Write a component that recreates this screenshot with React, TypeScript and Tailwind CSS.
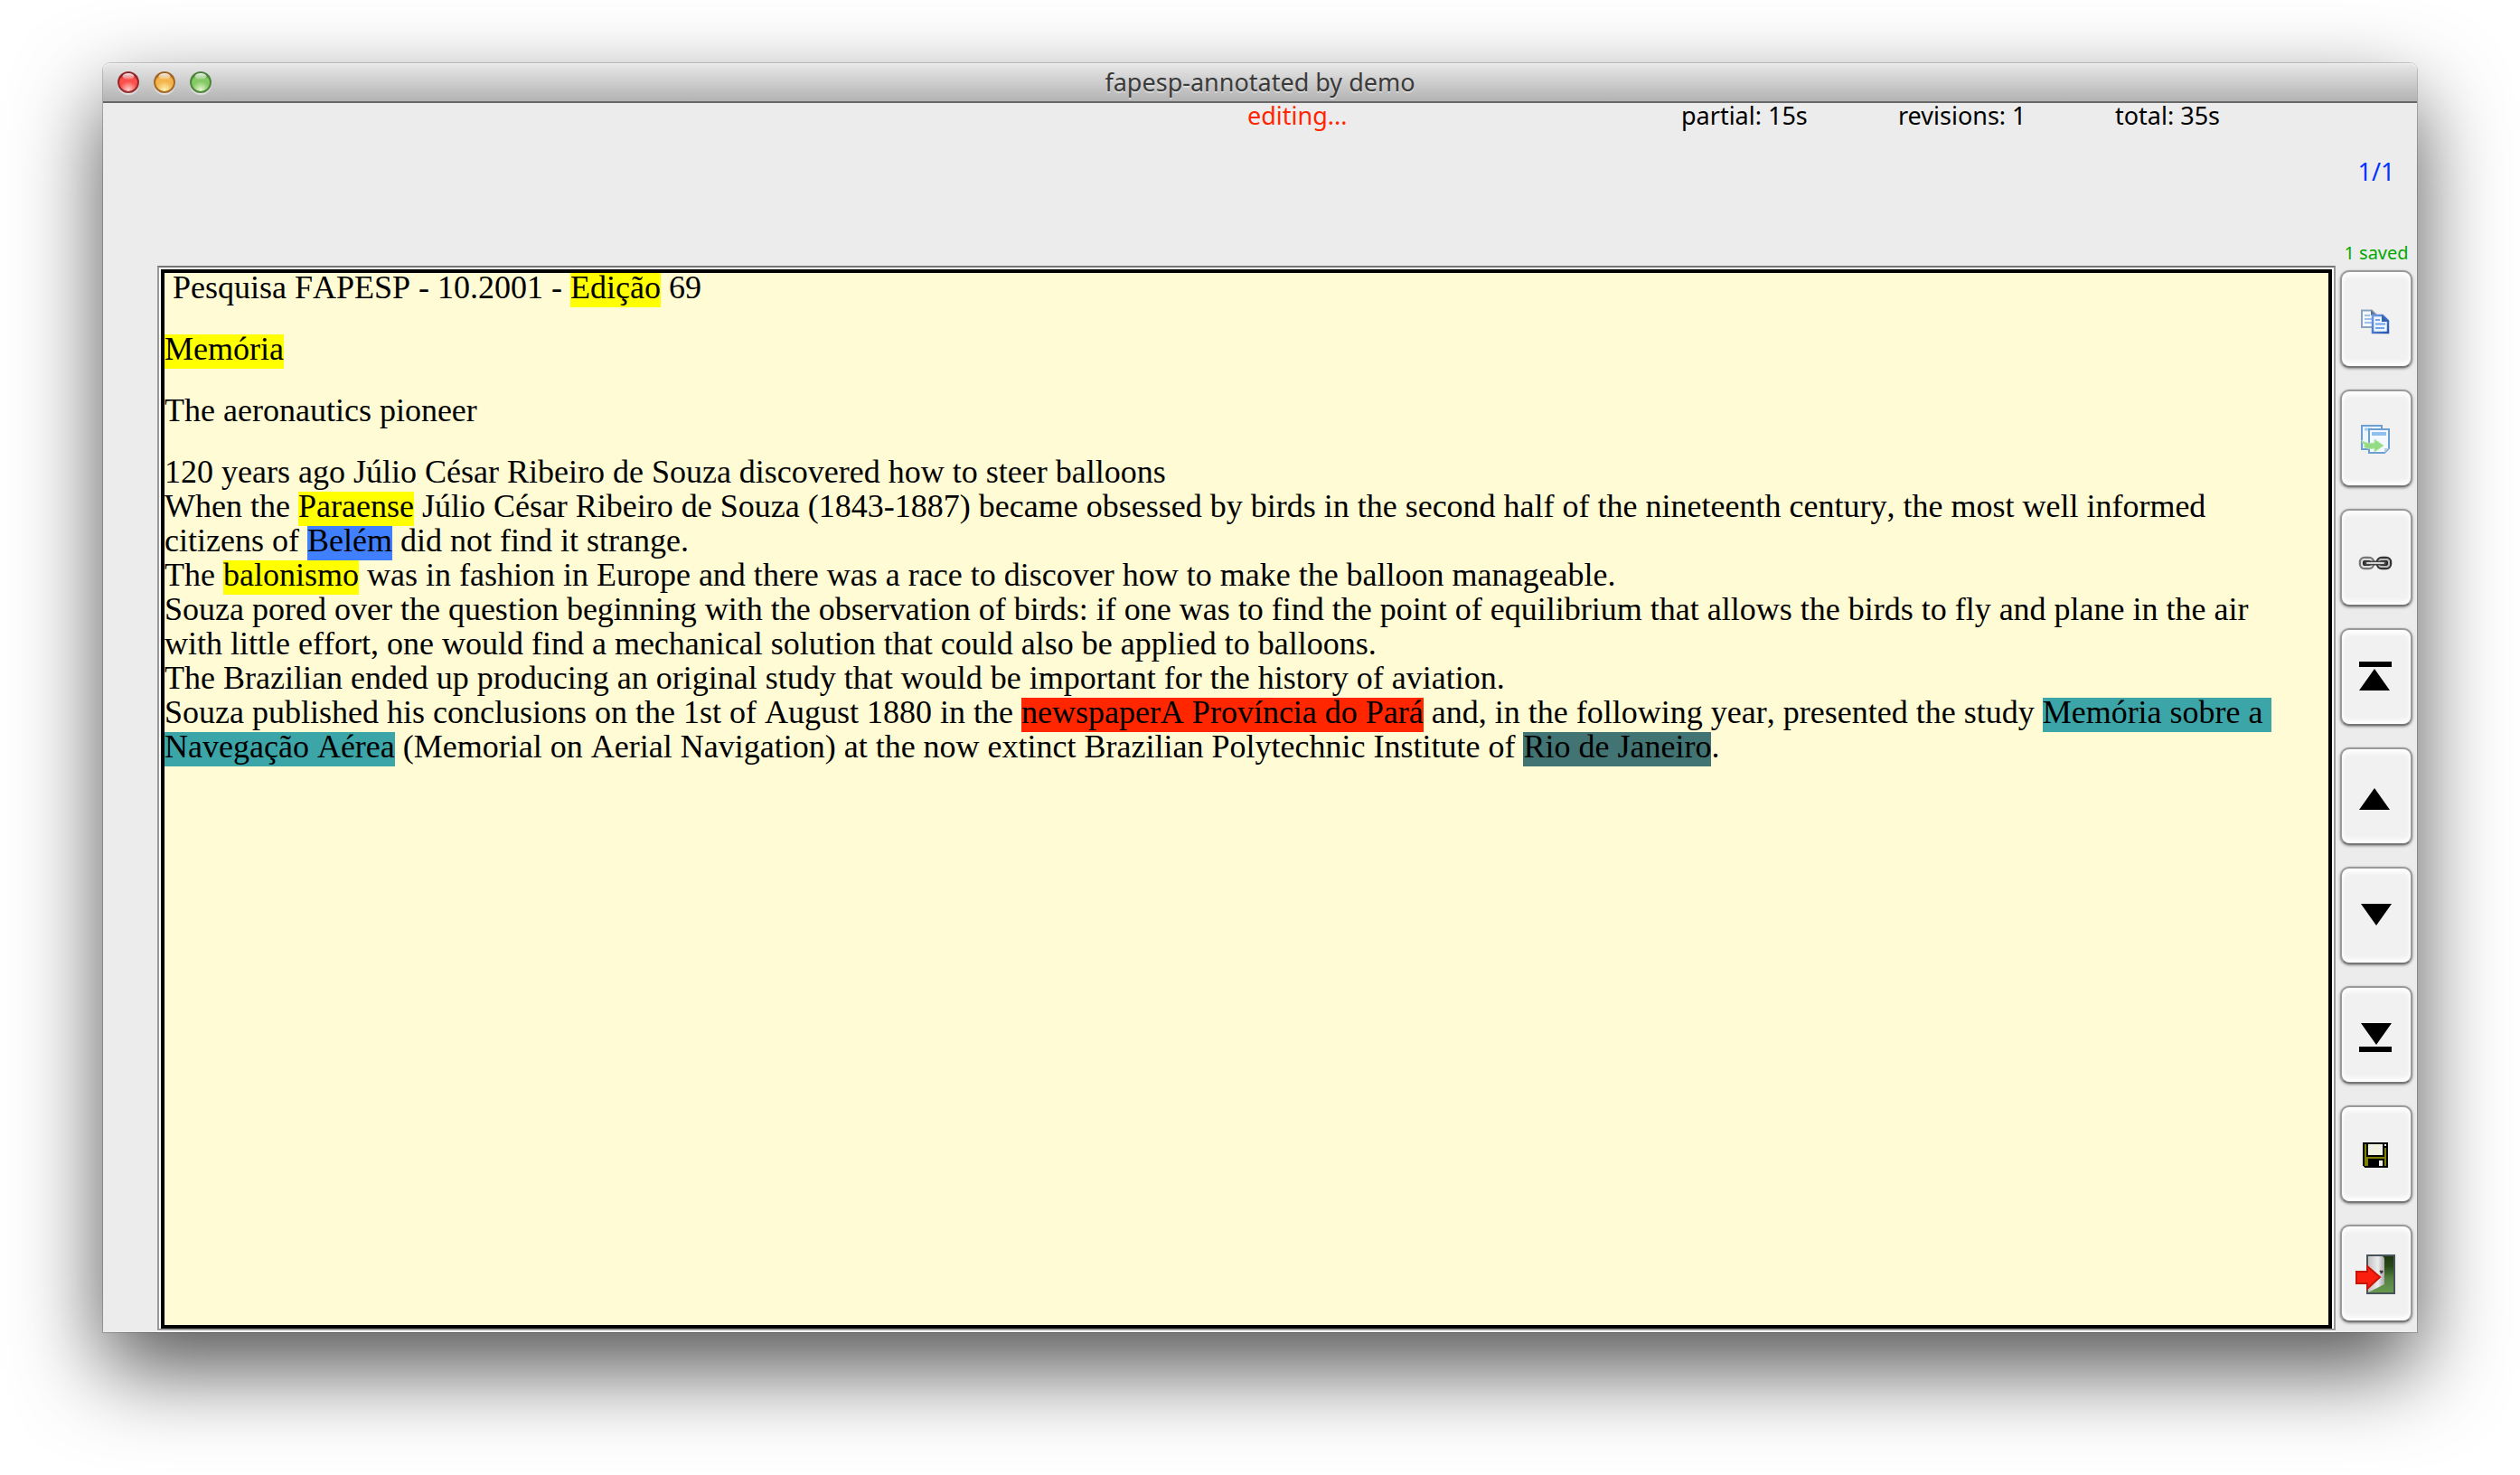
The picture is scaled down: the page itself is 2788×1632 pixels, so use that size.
import type { ReactNode } from "react";

function Mark({ className, children }: { className: string; children: ReactNode }) {
  return (
    <mark className={`inline-block whitespace-pre pb-[6px] -mb-[6px] leading-8 text-black ${className}`}>
      {children}
    </mark>
  );
}

function TrafficLight({
  id,
  label,
  rim,
  mid,
  glow,
}: {
  id: string;
  label: string;
  rim: string;
  mid: string;
  glow: string;
}) {
  return (
    <button type="button" aria-label={label} className="block size-6 rounded-full shadow-[0_2px_1px_rgba(255,255,255,0.55)]">
      <svg viewBox="0 0 24 24" className="block size-6">
        <defs>
          <radialGradient id={`${id}-body`} cx="50%" cy="88%" r="85%">
            <stop offset="0" stopColor={glow} />
            <stop offset="0.5" stopColor={mid} />
            <stop offset="0.75" stopColor={mid} />
            <stop offset="1" stopColor={rim} />
          </radialGradient>
          <linearGradient id={`${id}-shine`} x1="0" y1="0" x2="0" y2="1">
            <stop offset="0" stopColor="#fff" stopOpacity="0.95" />
            <stop offset="1" stopColor="#fff" stopOpacity="0.1" />
          </linearGradient>
        </defs>
        <circle cx="12" cy="12" r="11" fill={`url(#${id}-body)`} stroke={rim} strokeWidth="2" strokeOpacity="0.85" />
        <ellipse cx="12" cy="5.5" rx="6.5" ry="3.5" fill={`url(#${id}-shine)`} />
      </svg>
    </button>
  );
}

function ToolButton({ label, children }: { label: string; children: ReactNode }) {
  return (
    <button
      type="button"
      aria-label={label}
      className="flex h-[108px] w-full shrink-0 items-center justify-center rounded-[10px] border-2 border-[#9a9a9a] border-b-[#777777] bg-[#f1f1f1] shadow-[0_1px_3px_rgba(0,0,0,0.45),inset_0_4px_5px_#ffffff,inset_0_-4px_5px_#ffffff]"
    >
      <svg viewBox="0 0 48 48" className="size-12">
        {children}
      </svg>
    </button>
  );
}

function CopyIcon() {
  return (
    <>
      <defs>
        <linearGradient id="copy-front" x1="0" y1="0" x2="1" y2="1">
          <stop offset="0" stopColor="#6f9be0" />
          <stop offset="1" stopColor="#2657b0" />
        </linearGradient>
      </defs>
      <path d="M8 14.500h11l5 5V33H8z" fill="#f4f8fd" stroke="#8ba3bd" strokeWidth="2" />
      <path d="M18 14v6h6z" fill="#5d7288" />
      <path d="M11 20h6M11 24h8M11 28h8" stroke="#9cc2ea" strokeWidth="2" />
      <path d="M20 20h11l6 6v13H20z" fill="#eef5ff" stroke="url(#copy-front)" strokeWidth="2.500" />
      <path d="M30 19v8h8z" fill="#3465b8" />
      <path d="M23 25h5M23 29.500h11M23 34h10" stroke="#6ea2ea" strokeWidth="2" />
    </>
  );
}

function TransferIcon() {
  return (
    <>
      <path d="M8 10h22v26H8z" fill="#eef6fd" stroke="#6d9fd0" strokeWidth="2" />
      <path d="M11 14h8" stroke="#a5cdf0" strokeWidth="3" />
      <path d="M16 14h22v21l-5 5H16z" fill="#f3f9fe" stroke="#6d9fd0" strokeWidth="2" />
      <path d="M19 19h16" stroke="#8fc0ee" strokeWidth="4" />
      <path d="M33 40v-5h5z" fill="#b9cfe4" />
      <path d="M8 26c3 3 7 4 14 3v-4l10 7-10 7v-4c-6 1-10 0-12-2l2-2c-2 0-4-2-4-5z" fill="#94dc84" stroke="#b6e6a8" strokeWidth="1" />
    </>
  );
}

function ChainIcon() {
  return (
    <g fill="none">
      <rect x="6" y="24" width="15" height="12" rx="5" stroke="#777777" strokeWidth="2.500" />
      <rect x="8" y="26" width="11" height="8" rx="3" fill="#222222" stroke="#dddddd" strokeWidth="2" />
      <rect x="25" y="24" width="15" height="12" rx="5" stroke="#333333" strokeWidth="2.500" />
      <rect x="27" y="26" width="11" height="8" rx="3" fill="#222222" stroke="#bbbbbb" strokeWidth="2" />
      <path d="M13 30h20" stroke="#444444" strokeWidth="5" strokeLinecap="round" />
      <path d="M14 30h18" stroke="#d6d6d6" strokeWidth="2" strokeLinecap="round" />
    </g>
  );
}

function SaveIcon() {
  return (
    <g shapeRendering="crispEdges">
      <path d="M9 11h28v28H11l-2-2z" fill="#000000" />
      <path d="M11 13h24v24H11z" fill="#808000" />
      <path d="M13 11h20v16H13z" fill="#000000" />
      <path d="M15 13h16v12H15z" fill="#f1f1e4" />
      <path d="M33 13h2v4h-2z" fill="#000000" />
      <path d="M33 13h2v2h-2z" fill="#f1f1e4" />
      <path d="M15 29h18v8H15z" fill="#000000" />
      <path d="M27 31h4v6h-4z" fill="#f1f1e4" />
    </g>
  );
}

function ExitIcon() {
  return (
    <>
      <defs>
        <linearGradient id="exit-outside" x1="0" y1="0" x2="0" y2="1">
          <stop offset="0" stopColor="#1c3310" />
          <stop offset="0.300" stopColor="#2a4a1a" />
          <stop offset="0.600" stopColor="#538040" />
          <stop offset="1" stopColor="#6a9a50" />
        </linearGradient>
        <linearGradient id="exit-door" x1="0" y1="0" x2="1" y2="0">
          <stop offset="0" stopColor="#c2c2c2" />
          <stop offset="0.600" stopColor="#ececec" />
          <stop offset="1" stopColor="#a8a8a8" />
        </linearGradient>
      </defs>
      <rect x="14" y="4" width="30" height="42" fill="url(#exit-outside)" stroke="#47545a" strokeWidth="2" />
      <path d="M15 5h15q3 0 3 4v27L15 45z" fill="url(#exit-door)" />
      <path d="M28 21l3 2M29 24l2-3" stroke="#333333" strokeWidth="2" />
      <path d="M2 22h12v-6l14 12-14 13v-6H2z" fill="#fa1e0e" stroke="#c81408" strokeWidth="2" />
    </>
  );
}

const tools: { label: string; icon: ReactNode }[] = [
  { label: "Copy", icon: <CopyIcon /> },
  { label: "Transfer", icon: <TransferIcon /> },
  { label: "Link", icon: <ChainIcon /> },
  { label: "First", icon: <path d="M5 7h36v6H5zM22 15l17 24H5z" /> },
  { label: "Previous", icon: <path d="M22 15l17 24H5z" /> },
  { label: "Next", icon: <path d="M7 11h34L24 35z" /> },
  { label: "Last", icon: <path d="M7 11h34L24 35zM5 37h36v6H5z" /> },
  { label: "Save", icon: <SaveIcon /> },
  { label: "Exit", icon: <ExitIcon /> },
];

function Document() {
  return (
    <article className="-mt-[3px] flex flex-col gap-[30px] pr-6 font-['Liberation_Serif',serif] text-[36px] leading-[38px] text-black [font-kerning:none]">
      <p>
        &nbsp;Pesquisa FAPESP - 10.2001 - <Mark className="bg-[#ffff00]">Edição</Mark> 69
      </p>
      <p>
        <Mark className="bg-[#ffff00]">Memória</Mark>
      </p>
      <p>The aeronautics pioneer</p>
      <div>
        <p>120 years ago Júlio César Ribeiro de Souza discovered how to steer balloons</p>
        <p>
          When the <Mark className="bg-[#ffff00]">Paraense</Mark> Júlio César Ribeiro de Souza (1843-1887) became
          obsessed by birds in the second half of the nineteenth century, the most well informed citizens of{" "}
          <Mark className="bg-[#4080ff]">Belém</Mark> did not find it strange.
        </p>
        <p>
          The <Mark className="bg-[#ffff00]">balonismo</Mark> was in fashion in Europe and there was a race to discover
          how to make the balloon manageable.
        </p>
        <p>
          Souza pored over the question beginning with the observation of birds: if one was to find the point of
          equilibrium that allows the birds to fly and plane in the air with little effort, one would find a mechanical
          solution that could also be applied to balloons.
        </p>
        <p>
          The Brazilian ended up producing an original study that would be important for the history of aviation.
        </p>
        <p>
          Souza published his conclusions on the 1st of August 1880 in the{" "}
          <Mark className="bg-[#ff2600]">newspaperA Província do Pará</Mark> and, in the following year, presented the
          study <Mark className="bg-[#3ca5a8]">{"Memória sobre a "}</Mark>
          <Mark className="bg-[#3ca5a8]">Navegação Aérea</Mark> (Memorial on Aerial Navigation) at the now extinct
          Brazilian Polytechnic Institute of <Mark className="bg-[#427474]">Rio de Janeiro</Mark>.
        </p>
      </div>
    </article>
  );
}

export default function App() {
  return (
    <div className="flex min-h-screen flex-col bg-white px-[114px] pt-[70px] pb-[158px] font-['Noto_Sans',sans-serif] text-[27px]">
      <div className="flex flex-1 flex-col rounded-t-[8px] bg-[#ececec] shadow-[0_0_0_1px_rgba(0,0,0,0.2),0_40px_96px_rgba(0,0,0,0.68)]">
        <header className="flex h-11 items-center rounded-t-[8px] border-b-2 border-[#686868] bg-linear-to-b from-[#e8e8e8] to-[#b3b3b3] px-4 leading-[42px] shadow-[inset_0_1px_0_#f6f6f6]">
          <div className="flex flex-1 gap-4">
            <TrafficLight id="close" label="Close" rim="#8a1a1c" mid="#f9504c" glow="#ffd0cc" />
            <TrafficLight id="minimize" label="Minimize" rim="#9a5a14" mid="#f4b44c" glow="#fff3b0" />
            <TrafficLight id="zoom" label="Zoom" rim="#3f7a2c" mid="#85c866" glow="#e2f8c8" />
          </div>
          <h1 className="text-[#3a3a3a] [text-shadow:0_2px_0_rgba(255,255,255,0.4)]">fapesp-annotated by demo</h1>
          <div className="flex-1" />
        </header>

        <div className="flex flex-1">
          <main className="flex flex-1 flex-col pl-[60px]">
            <div className="flex h-[180px] justify-end pr-1 leading-7 text-black">
              <p className="w-[480px] text-[#ff2600]">editing...</p>
              <p className="w-[240px]">partial: 15s</p>
              <p className="w-[240px]">revisions: 1</p>
              <p className="w-[240px]">total: 35s</p>
            </div>
            <div className="flex flex-1 flex-col border-b-2 border-white">
              <div className="flex flex-1 flex-col border-2 border-[#999999] border-t-[#747474] bg-white px-[2px] pt-[2px]">
                <div className="flex-1 border-4 border-black bg-[#fffbd5]">
                  <Document />
                </div>
              </div>
            </div>
          </main>

          <aside className="flex w-[90px] shrink-0 flex-col px-[5px] pt-[60px] text-center">
            <p className="leading-8 text-[#0433ff]">1/1</p>
            <p className="mt-16 text-xl leading-5 whitespace-nowrap text-[#00a800]">1 saved</p>
            <nav aria-label="Tools" className="mt-[9px] flex flex-col gap-6">
              {tools.map((tool) => (
                <ToolButton key={tool.label} label={tool.label}>
                  {tool.icon}
                </ToolButton>
              ))}
            </nav>
          </aside>
        </div>
      </div>
    </div>
  );
}
